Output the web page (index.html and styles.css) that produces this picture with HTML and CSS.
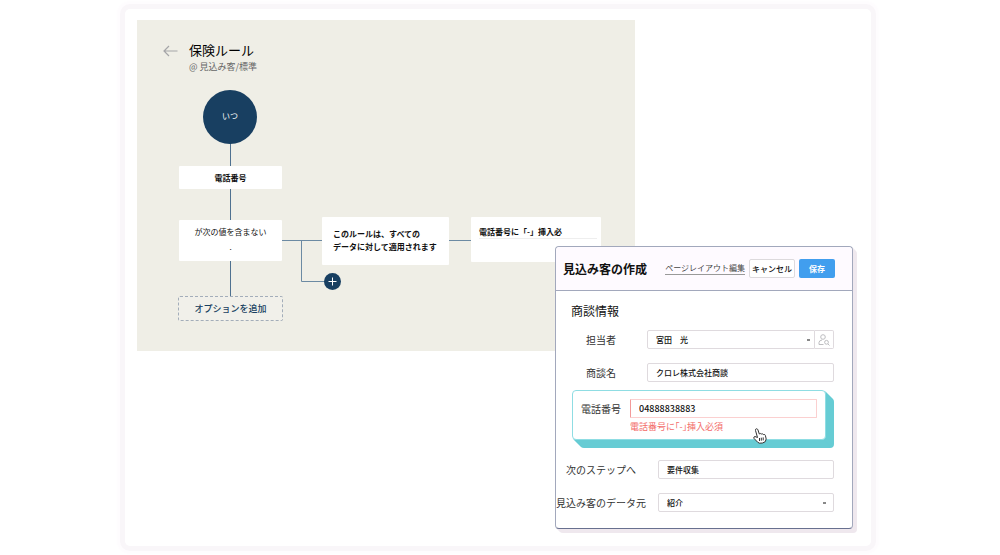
FILE: index.html
```html
<!DOCTYPE html>
<html lang="ja">
<head>
  <meta charset="UTF-8">
  <title>保険ルール</title>
  <meta name="viewport" content="width=device-width, initial-scale=1.0">
  <link rel="stylesheet" href="styles.css">
</head>
<body>
  <main class="card">
    <section class="canvas">
      <header class="rule-header">
        <a class="back" href="#" aria-label="戻る">
          <svg width="15" height="12" viewBox="0 0 15 12" fill="none" stroke="#a5a5a8" stroke-width="1.2"><path d="M14.5 6H1M6 1L1 6l5 5"/></svg>
        </a>
        <div>
          <h1>保険ルール</h1>
          <p>@ 見込み客/標準</p>
        </div>
      </header>

      <svg class="lines" width="498" height="331" fill="none" stroke="#6c8aa3" stroke-width="1">
        <path stroke="#4f7190" d="M93.500 120V148M93.500 168V202M93.500 240V278"/>
        <path d="M144 220.500H186M164.500 220.500V261.500H188M311 220.500H335"/>
      </svg>

      <div class="node when">いつ</div>
      <div class="node field">電話番号</div>
      <div class="node condition">が次の値を含まない<span>.</span></div>
      <button class="node option">オプションを追加</button>
      <div class="node scope">このルールは、すべての<br>データに対して適用されます</div>
      <div class="node action"><p>電話番号に「-」挿入必</p></div>
      <button class="node plus" aria-label="追加">
        <svg width="17" height="17" viewBox="0 0 17 17" stroke="#fff" stroke-width="1"><path d="M8.500 4.500v8M4.500 8.500h8"/></svg>
      </button>
    </section>

    <form class="dialog">
      <header class="dialog-header">
        <h2>見込み客の作成</h2>
        <a href="#">ページレイアウト編集</a>
        <button type="button" class="cancel">キャンセル</button>
        <button type="button" class="save">保存</button>
      </header>

      <div class="dialog-body">
        <h3>商談情報</h3>
        <div class="row">
          <label for="owner">担当者</label>
          <div class="control joined">
            <select id="owner"><option>宮田　光</option></select>
            <button type="button" class="lookup" aria-label="担当者を検索">
              <svg width="12" height="12" viewBox="0 0 12 12" fill="none" stroke="#bdbdc0" stroke-width="1"><circle cx="5" cy="3" r="2.300"/><path d="M5.500 10.500H1V8.500Q1 6.500 4 6M10 10l1.500 1.500"/><circle cx="8.500" cy="8.300" r="1.900"/></svg>
            </button>
          </div>
        </div>
        <div class="row">
          <label for="deal">商談名</label>
          <div class="control"><input id="deal" type="text" value="クロレ株式会社商談"></div>
        </div>
        <div class="callout">
          <label for="phone">電話番号</label>
          <div class="phone">
            <input id="phone" type="text" value="04888838883">
            <p class="error">電話番号に「-」挿入必須</p>
          </div>
          <svg class="hand" width="14" height="16" viewBox="0 0 14 16" fill="#fff" stroke="#333" stroke-width="1" stroke-linejoin="round"><path d="M4.500 9.500L2.500 2.500Q2.200 1 3.300.8T4.900 1.800L6.300 6Q7.300 5 8.300 6Q9.300 5.300 10.300 6.500Q12 6 12.400 7.500L13.200 11Q13 14.500 9.500 15L6.500 15.200Q4.500 14.500 3.500 13L.8 10.200Q.5 8.800 2 8.500Z"/><path d="M6.500 10v3M8.300 9.700v3M10.200 9.400v3"/></svg>
        </div>
        <div class="row narrow">
          <label for="step">次のステップへ</label>
          <div class="control"><input id="step" type="text" value="要件収集"></div>
        </div>
        <div class="row narrow">
          <label for="source">見込み客のデータ元</label>
          <div class="control"><select id="source"><option>紹介</option></select></div>
        </div>
      </div>
    </form>
  </main>
</body>
</html>
```

FILE: styles.css
```css
* {
  box-sizing: border-box;
}
body {
  margin: 0;
  padding: 9px 4px 9px 0;
  background: #fff;
  color: #111;
  font-family: "Noto Sans CJK JP", sans-serif;
}
h1, h2, h3, p {
  margin: 0;
  font-weight: normal;
}
button, input, select {
  margin: 0;
  font-family: inherit;
  font-size: 8px;
  color: #111;
}
button {
  padding: 0;
  cursor: pointer;
}
.card {
  position: relative;
  max-width: 746px;
  margin: 0 auto;
  padding: 11px 12px;
  min-height: 537px;
  border-radius: 5px;
  background: #fff;
  box-shadow: 0 0 0 5px #f9f6f9, 0 0 3px 8px #fefcfe;
}

/* rule flow */
.canvas {
  position: relative;
  max-width: 498px;
  height: 331px;
  padding: 20px 26px;
  background: #efeee6;
}
.rule-header {
  display: flex;
  gap: 11px;
}
.back {
  display: flex;
  align-items: center;
  height: 22px;
}
.rule-header h1 {
  font-size: 13px;
  line-height: 20px;
  color: #000;
}
.rule-header p {
  font-size: 9px;
  line-height: 14px;
  color: #666;
}
.lines {
  position: absolute;
  left: 0;
  top: 0;
}
.node {
  position: absolute;
  background: #fff;
  font-size: 8px;
  line-height: 13px;
  border-radius: 1px;
}
.when {
  left: 66px;
  top: 70px;
  width: 54px;
  height: 54px;
  border-radius: 50%;
  background: #183f61;
  color: #fff;
  line-height: 52px;
  text-align: center;
}
.field {
  left: 42px;
  top: 146px;
  width: 103px;
  height: 23px;
  line-height: 23px;
  text-align: center;
  font-weight: bold;
}
.condition {
  left: 42px;
  top: 200px;
  width: 103px;
  height: 41px;
  padding-top: 5px;
  text-align: center;
}
.condition span {
  display: block;
  line-height: 17px;
}
.option {
  left: 41px;
  top: 276px;
  width: 105px;
  height: 25px;
  border: 1px dashed #a3adb9;
  border-radius: 2px;
  background: #f1f0ea;
  color: #183f61;
  font-size: 9px;
  font-weight: 500;
}
.scope {
  left: 185px;
  top: 197px;
  width: 127px;
  height: 48px;
  padding: 10px 11px;
  font-weight: bold;
  white-space: nowrap;
}
.action {
  left: 334px;
  top: 197px;
  width: 130px;
  height: 45px;
  padding: 8px 4px 8px 8px;
}
.action p {
  border-bottom: 1px solid #eee;
  font-weight: bold;
}
.plus {
  left: 187px;
  top: 253px;
  width: 17px;
  height: 17px;
  border: none;
  border-radius: 50%;
  background: #183f61;
}
.plus svg {
  display: block;
}

/* record form */
.dialog {
  position: absolute;
  top: 237px;
  right: 18px;
  width: 298px;
  border: 1px solid #a2a8bc;
  border-bottom-color: #68708f;
  border-radius: 4px;
  background: #fff;
  box-shadow: 1px 1px #efe8ee, 2px 2px #efe8ee, 3px 3px #efe8ee, 4px 4px #efe8ee;
}
.dialog-header {
  display: flex;
  align-items: center;
  height: 44px;
  padding: 0 17px 0 7px;
  gap: 4px;
  border-bottom: 1px solid #a2a8bc;
  border-radius: 4px 4px 0 0;
  background: #fefaff;
  white-space: nowrap;
}
.dialog-header h2 {
  font-size: 12px;
  font-weight: bold;
  margin-right: auto;
}
.dialog-header a {
  color: #444;
  font-size: 8px;
  line-height: 12px;
  text-decoration: none;
  border-bottom: 1px solid #999;
}
.dialog-header button {
  height: 19px;
  border-radius: 2px;
}
.cancel {
  width: 46px;
  border: 1px solid #dddadd;
  background: #fff;
  font-weight: 500;
}
.save {
  width: 36px;
  border: none;
  background: #419eee;
  color: #fff;
  font-weight: bold;
}
.dialog-body {
  padding: 11px 18px 2px 0;
}
.dialog-body h3 {
  padding-left: 15px;
  font-size: 12px;
  line-height: 18px;
  margin-bottom: 10px;
}
.row {
  display: flex;
  align-items: center;
  gap: 1px;
  margin-bottom: 14px;
}
.row label {
  flex: 0 0 90px;
  text-align: center;
}
.row.narrow {
  gap: 12px;
}
label {
  color: #333;
  font-size: 10px;
  line-height: 19px;
  white-space: nowrap;
}
.control {
  display: flex;
  flex: 1;
}
input, select {
  width: 100%;
  min-width: 0;
  height: 19px;
  padding: 0 8px;
  border: 1px solid #dfdade;
  border-radius: 2px;
  background: #fff;
  font-weight: 500;
}
select {
  appearance: none;
  background-image: linear-gradient(#888, #888);
  background-size: 3px 2px;
  background-position: right 7px center;
  background-repeat: no-repeat;
}
.joined select {
  border-radius: 2px 0 0 2px;
  background-position: right 4px center;
}
.lookup {
  display: flex;
  flex: 0 0 19px;
  align-items: center;
  justify-content: center;
  border: 1px solid #dfdade;
  border-left: none;
  border-radius: 0 2px 2px 0;
  background: #fff;
}
.callout {
  position: relative;
  display: flex;
  gap: 9px;
  height: 50px;
  margin: -6px 8px 20px 16px;
  padding: 8px;
  border: 1px solid #8fdde3;
  border-radius: 4px;
  background: #fff;
  box-shadow: 1px 1px #66ccd4, 2px 2px #66ccd4, 3px 3px #66ccd4, 4px 4px #66ccd4, 5px 5px #66ccd4, 6px 6px #66ccd4, 7px 7px #66ccd4, 8px 8px #66ccd4;
}
.phone {
  flex: 1;
}
.phone input {
  display: block;
  border-color: #fbd0d0;
  border-left-color: #f39a9a;
  border-radius: 1px;
  font-size: 9px;
}
.error {
  font-size: 9px;
  line-height: 18px;
  color: #f36c69;
  font-feature-settings: "halt";
  white-space: nowrap;
}
.hand {
  position: absolute;
  right: 58px;
  bottom: -5px;
}
```
